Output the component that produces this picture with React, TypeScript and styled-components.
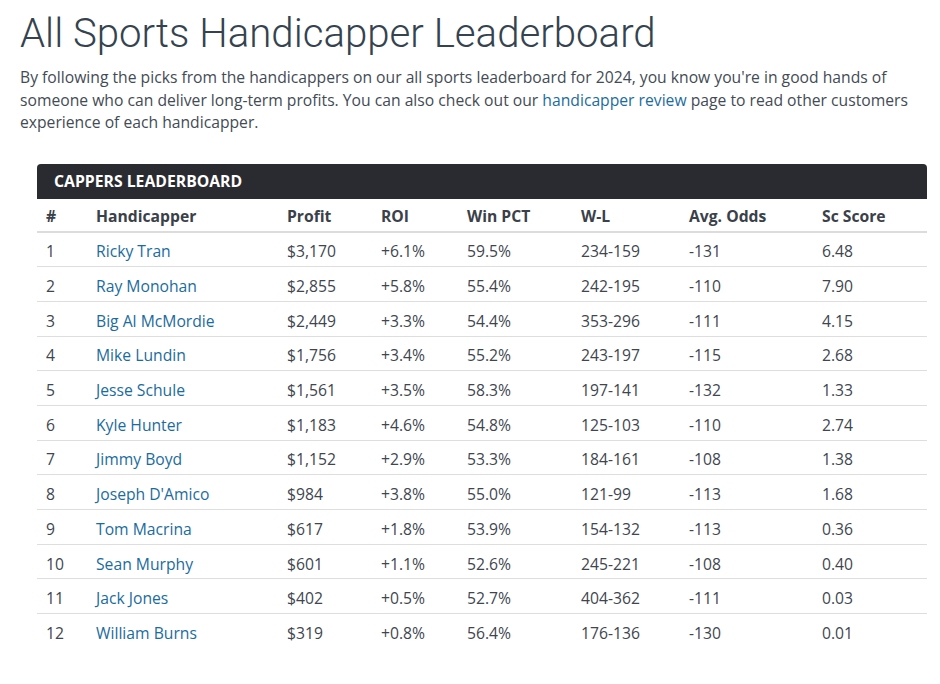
import React from "react";
import styled, { createGlobalStyle } from "styled-components";

const Global = createGlobalStyle`
  html, body { margin: 0; padding: 0; background: #fff; }
  body { font-family: "Open Sans", "Liberation Sans", sans-serif; }
`;

const Page = styled.div`
  padding: 8px 20px 0 20px;
  width: 940px;
  box-sizing: border-box;
`;

const Title = styled.h1`
  font-family: Roboto, "Open Sans", sans-serif;
  font-weight: 300;
  font-size: 40.2px;
  line-height: 52px;
  color: #34434f;
  margin: 0 0 6px 0;
`;

const Intro = styled.p`
  font-size: 15.7px;
  line-height: 22.5px;
  color: #434b55;
  margin: 0;
  width: 900px;
`;

const Link = styled.a`
  color: #1b6c9e;
  text-decoration: none;
`;

const Board = styled.div`
  margin: 30px 0 0 17px;
  width: 890px;
`;

const BoardHead = styled.div`
  background: #2a2b30;
  color: #fff;
  height: 35px;
  display: flex;
  align-items: center;
  padding-left: 17px;
  font-weight: 700;
  font-size: 15.75px;
  border-radius: 4px 4px 0 0;
`;

const Table = styled.table`
  width: 100%;
  border-collapse: collapse;
  table-layout: fixed;
  font-size: 15.7px;
  color: #404650;
`;

const Th = styled.th<{ $w: number }>`
  box-sizing: border-box;
  width: ${(p) => p.$w}px;
  text-align: left;
  font-weight: 700;
  color: #3a4149;
  height: 33px;
  padding: 2px 0 0 9px;
  border-bottom: 2px solid #dcdcdc;
`;

const Tr = styled.tr<{ $last?: boolean }>`
  border-bottom: ${(p) => (p.$last ? "none" : "1px solid #dedede")};
`;

const Td = styled.td`
  height: 29.7px;
  padding: 4px 0 0 9px;
  white-space: nowrap;
`;

const NameLink = styled.a`
  color: #1b6c9e;
  text-decoration: none;
`;

const cols = [
  { label: "#", w: 50 },
  { label: "Handicapper", w: 191 },
  { label: "Profit", w: 94 },
  { label: "ROI", w: 86 },
  { label: "Win PCT", w: 114 },
  { label: "W-L", w: 108 },
  { label: "Avg. Odds", w: 133 },
  { label: "Sc Score", w: 114 },
];

const rows: [string, string, string, string, string, string, string][] = [
  ["Ricky Tran", "$3,170", "+6.1%", "59.5%", "234-159", "-131", "6.48"],
  ["Ray Monohan", "$2,855", "+5.8%", "55.4%", "242-195", "-110", "7.90"],
  ["Big Al McMordie", "$2,449", "+3.3%", "54.4%", "353-296", "-111", "4.15"],
  ["Mike Lundin", "$1,756", "+3.4%", "55.2%", "243-197", "-115", "2.68"],
  ["Jesse Schule", "$1,561", "+3.5%", "58.3%", "197-141", "-132", "1.33"],
  ["Kyle Hunter", "$1,183", "+4.6%", "54.8%", "125-103", "-110", "2.74"],
  ["Jimmy Boyd", "$1,152", "+2.9%", "53.3%", "184-161", "-108", "1.38"],
  ["Joseph D'Amico", "$984", "+3.8%", "55.0%", "121-99", "-113", "1.68"],
  ["Tom Macrina", "$617", "+1.8%", "53.9%", "154-132", "-113", "0.36"],
  ["Sean Murphy", "$601", "+1.1%", "52.6%", "245-221", "-108", "0.40"],
  ["Jack Jones", "$402", "+0.5%", "52.7%", "404-362", "-111", "0.03"],
  ["William Burns", "$319", "+0.8%", "56.4%", "176-136", "-130", "0.01"],
];

export default function App() {
  return (
    <Page>
      <Global />
      <Title>All Sports Handicapper Leaderboard</Title>
      <Intro>
        By following the picks from the handicappers on our all sports leaderboard for 2024, you know
        you're in good hands of someone who can deliver long-term profits. You can also check out our{" "}
        <Link href="#">handicapper review</Link> page to read other customers experience of each
        handicapper.
      </Intro>
      <Board>
        <BoardHead>CAPPERS LEADERBOARD</BoardHead>
        <Table>
          <thead>
            <tr>
              {cols.map((c) => (
                <Th key={c.label} $w={c.w}>
                  {c.label}
                </Th>
              ))}
            </tr>
          </thead>
          <tbody>
            {rows.map((r, i) => (
              <Tr key={r[0]} $last={i === rows.length - 1}>
                <Td>{i + 1}</Td>
                <Td>
                  <NameLink href="#">{r[0]}</NameLink>
                </Td>
                {r.slice(1).map((v, j) => (
                  <Td key={j}>{v}</Td>
                ))}
              </Tr>
            ))}
          </tbody>
        </Table>
      </Board>
    </Page>
  );
}
